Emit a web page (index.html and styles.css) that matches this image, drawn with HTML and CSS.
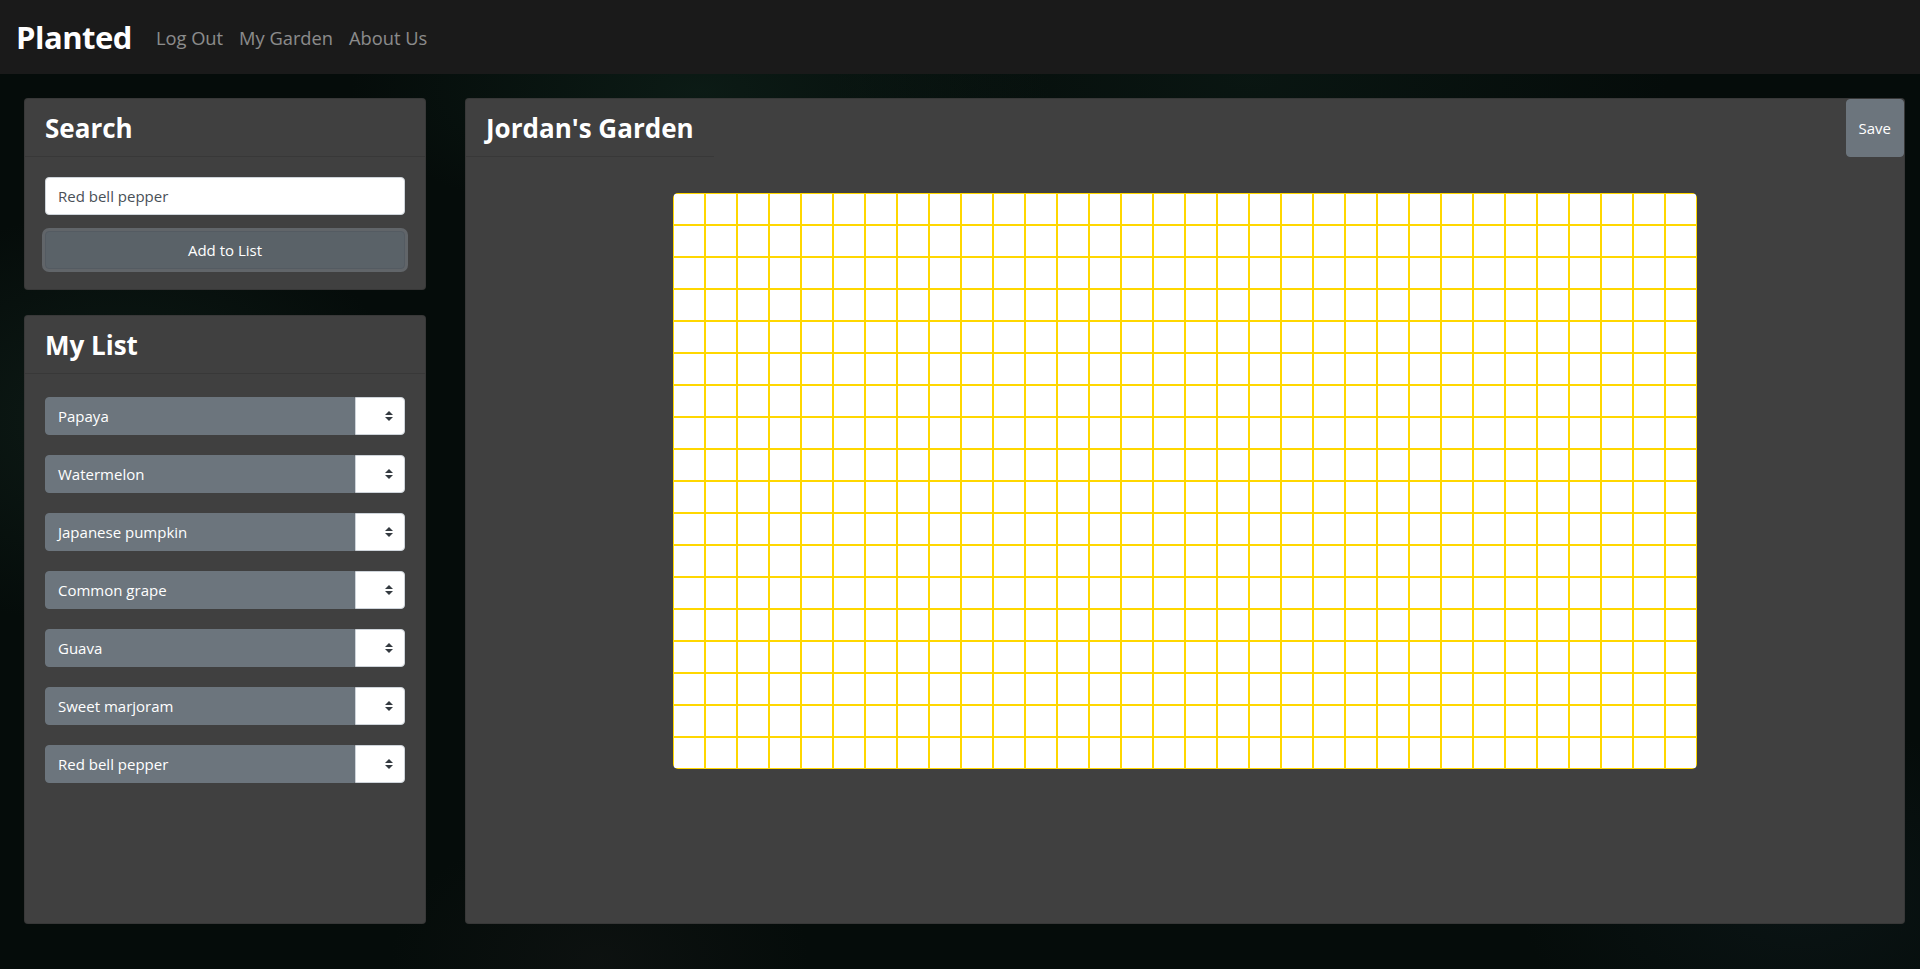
FILE: index.html
```html
<!DOCTYPE html>
<html lang="en">
<head>
<meta charset="utf-8">
<title>Planted</title>
<link rel="stylesheet" href="styles.css">
</head>
<body>
<nav class="navbar">
  <a class="brand" href="#">Planted</a>
  <a class="nav-link" href="#">Log Out</a>
  <a class="nav-link" href="#">My Garden</a>
  <a class="nav-link" href="#">About Us</a>
</nav>
<main class="main">
  <div class="side">
    <section class="card">
      <div class="card-header"><h3 class="title">Search</h3></div>
      <div class="card-body">
        <input class="text-input" type="text" value="Red bell pepper">
        <button class="btn-add" type="button">Add to List</button>
      </div>
    </section>
    <section class="card card-list">
      <div class="card-header"><h3 class="title">My List</h3></div>
      <div class="card-body list-body">
        <div class="item"><span class="item-label">Papaya</span><span class="item-select"><svg class="sort" viewBox="0 0 4 5" width="8" height="10"><path d="M2 0L0 2h4zm0 5L0 3h4z" fill="#343a40"/></svg></span></div>
        <div class="item"><span class="item-label">Watermelon</span><span class="item-select"><svg class="sort" viewBox="0 0 4 5" width="8" height="10"><path d="M2 0L0 2h4zm0 5L0 3h4z" fill="#343a40"/></svg></span></div>
        <div class="item"><span class="item-label">Japanese pumpkin</span><span class="item-select"><svg class="sort" viewBox="0 0 4 5" width="8" height="10"><path d="M2 0L0 2h4zm0 5L0 3h4z" fill="#343a40"/></svg></span></div>
        <div class="item"><span class="item-label">Common grape</span><span class="item-select"><svg class="sort" viewBox="0 0 4 5" width="8" height="10"><path d="M2 0L0 2h4zm0 5L0 3h4z" fill="#343a40"/></svg></span></div>
        <div class="item"><span class="item-label">Guava</span><span class="item-select"><svg class="sort" viewBox="0 0 4 5" width="8" height="10"><path d="M2 0L0 2h4zm0 5L0 3h4z" fill="#343a40"/></svg></span></div>
        <div class="item"><span class="item-label">Sweet marjoram</span><span class="item-select"><svg class="sort" viewBox="0 0 4 5" width="8" height="10"><path d="M2 0L0 2h4zm0 5L0 3h4z" fill="#343a40"/></svg></span></div>
        <div class="item"><span class="item-label">Red bell pepper</span><span class="item-select"><svg class="sort" viewBox="0 0 4 5" width="8" height="10"><path d="M2 0L0 2h4zm0 5L0 3h4z" fill="#343a40"/></svg></span></div>
      </div>
    </section>
  </div>
  <section class="card card-garden">
    <div class="garden-top">
      <div class="card-header garden-header"><h3 class="title">Jordan's Garden</h3></div>
      <button class="btn-save" type="button">Save</button>
    </div>
    <div class="garden-grid"></div>
  </section>
</main>
</body>
</html>
```

FILE: styles.css
```css
* { box-sizing: border-box; }
html, body { margin: 0; padding: 0; }
body {
  width: 1920px;
  height: 969px;
  overflow: hidden;
  font-family: "Open Sans", "Noto Sans", sans-serif;
  font-size: 16px;
  color: #fff;
  background-color: #050c0a;
  background-image:
    radial-gradient(ellipse 420px 300px at 120px 420px, rgba(30, 55, 45, 0.35), transparent 70%),
    radial-gradient(ellipse 500px 200px at 700px 90px, rgba(20, 45, 35, 0.45), transparent 70%),
    radial-gradient(ellipse 600px 250px at 1250px 80px, rgba(18, 40, 32, 0.35), transparent 70%),
    radial-gradient(ellipse 400px 250px at 1800px 900px, rgba(20, 35, 40, 0.35), transparent 70%),
    radial-gradient(ellipse 300px 200px at 600px 960px, rgba(30, 30, 30, 0.3), transparent 70%);
}

.navbar {
  height: 74px;
  background: #1a1a1a;
  display: flex;
  align-items: center;
  padding: 0 16px;
}
.brand {
  font-size: 31px;
  font-weight: 700;
  color: #fff;
  text-decoration: none;
  margin-right: 16px;
  letter-spacing: -0.5px;
}
.nav-link {
  font-size: 18.3px;
  color: rgba(255, 255, 255, 0.5);
  text-decoration: none;
  padding: 0 8px;
}

.main {
  display: flex;
  gap: 39px;
  padding: 24px 15px 45px 24px;
  height: 895px;
}
.side {
  width: 402px;
  display: flex;
  flex-direction: column;
  gap: 25px;
}

.card {
  background: #404040;
  border: 1px solid rgba(0, 0, 0, 0.125);
  border-radius: 4px;
}
.card-header {
  padding: 13px 20px 11px;
  border-bottom: 1px solid rgba(0, 0, 0, 0.125);
}
.title {
  margin: 0;
  font-size: 26px;
  line-height: 33px;
  font-weight: 700;
  color: #fff;
  white-space: nowrap;
}
.card-body { padding: 20px; }

.text-input {
  display: block;
  width: 100%;
  height: 38px;
  padding: 6px 12px;
  font-family: inherit;
  font-size: 15px;
  color: #495057;
  background: #fff;
  border: 1px solid #ced4da;
  border-radius: 4px;
  outline: none;
}
.btn-add {
  display: block;
  width: 100%;
  height: 38px;
  margin-top: 16px;
  font-family: inherit;
  font-size: 15px;
  color: #fff;
  background: #5a6268;
  border: 1px solid #545b62;
  border-radius: 4px;
  box-shadow: 0 0 0 3px rgba(130, 138, 145, 0.5);
}

.card-list { flex: 1; }
.list-body {
  padding-top: 23px;
  display: flex;
  flex-direction: column;
  gap: 20px;
}
.item {
  display: flex;
  height: 38px;
}
.item-label {
  flex: 1;
  display: flex;
  align-items: center;
  padding: 0 12px;
  background: #6c757d;
  border: 1px solid #6c757d;
  border-radius: 4px 0 0 4px;
  font-size: 15px;
  color: #fff;
}
.item-select {
  width: 50px;
  display: flex;
  align-items: center;
  justify-content: flex-end;
  padding-right: 11px;
  background: #fff;
  border: 1px solid #ced4da;
  border-radius: 0 4px 4px 0;
}
.sort { display: block; }

.card-garden {
  flex: 1;
  display: flex;
  flex-direction: column;
}
.garden-top {
  display: flex;
  justify-content: space-between;
  align-items: flex-start;
}
.garden-header { flex: none; }
.btn-save {
  height: 58px;
  padding: 0 12px;
  font-family: inherit;
  font-size: 15px;
  color: #fff;
  background: #6c757d;
  border: 1px solid #6c757d;
  border-radius: 4px;
}
.garden-grid {
  align-self: center;
  margin-top: 36px;
  width: 1024px;
  height: 576px;
  border-radius: 5px;
  background-color: #fff;
  background-image:
    linear-gradient(to right, #ffd700 0, #ffd700 1px, transparent 1px, transparent 31px, #ffd700 31px, #ffd700 32px),
    linear-gradient(to bottom, #ffd700 0, #ffd700 1px, transparent 1px, transparent 31px, #ffd700 31px, #ffd700 32px);
  background-size: 32px 32px;
}
```
